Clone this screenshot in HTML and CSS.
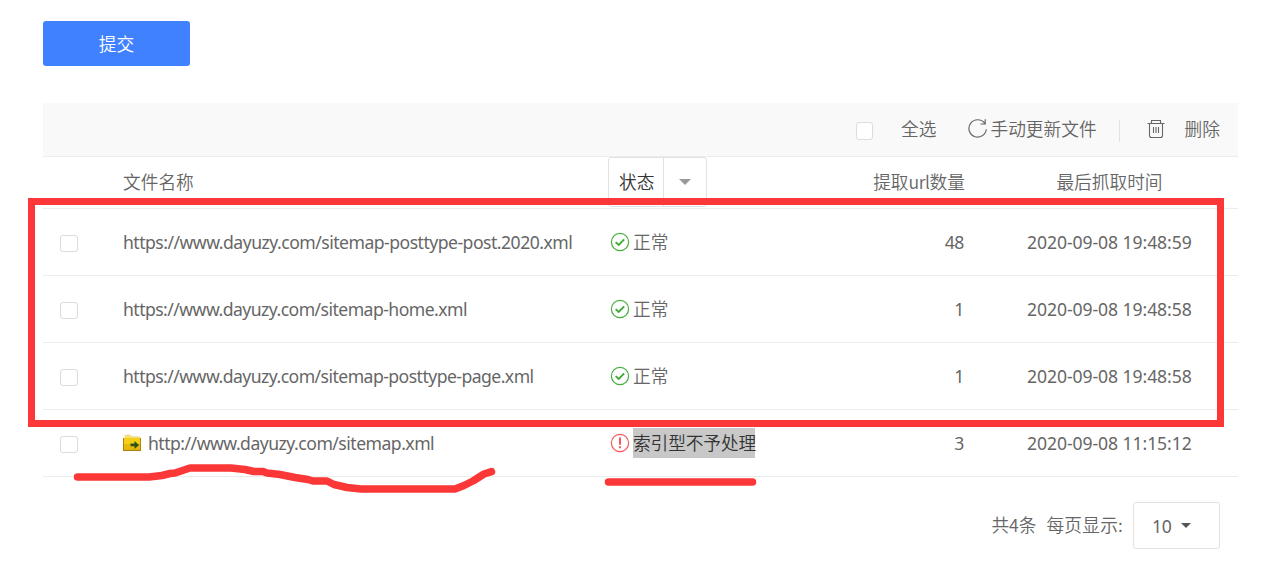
FILE: index.html
```html
<!DOCTYPE html>
<html lang="zh-CN">
<head>
<meta charset="utf-8">
<title>提交</title>
<link rel="stylesheet" href="styles.css">
</head>
<body>
<svg class="defs" width="0" height="0">
  <symbol id="ok" viewBox="0 0 20 20"><circle cx="10" cy="10" r="8.6" fill="none" stroke="#45ae3c" stroke-width="1.2"/><path d="M5.7 10.1 8.7 13l5.5-5.7" fill="none" stroke="#3fab35" stroke-width="1.9"/></symbol>
</svg>
<main class="page">
  <button class="submit">提交</button>
  <section class="panel">
    <div class="toolbar">
      <span class="box"></span>
      <span class="all">全选</span>
      <svg class="refresh" viewBox="0 0 20 20"><path d="M16.600 5.200A8.700 8.700 0 1 0 18.300 11.300M17.200 1.300v4.700h-4.700" fill="none" stroke="#666" stroke-width="1.200"/></svg>
      <span class="update">手动更新文件</span>
      <span class="divider"></span>
      <svg class="trash" viewBox="0 0 18 20"><path d="M.5 4.500h17M4.500 4V1.500h9V4M2.500 5v11.500q0 2 2 2h9q2 0 2-2V5M6.500 8v6M9 8v6M11.500 8v6" fill="none" stroke="#666" stroke-width="1.100"/></svg>
      <span class="delete">删除</span>
    </div>
    <div class="row head">
      <span></span>
      <span>文件名称</span>
      <div class="filter"><span class="filter-name">状态</span><span class="filter-arrow"><i class="caret"></i></span></div>
      <span class="count">提取<span class="word">url</span>数量</span>
      <span class="time">最后抓取时间</span>
    </div>
    <div class="row">
      <span class="box"></span>
      <span class="latin url">https://www.dayuzy.com/sitemap-posttype-post.2020.xml</span>
      <span class="status"><svg class="mark"><use href="#ok"/></svg><span>正常</span></span>
      <span class="latin count">48</span>
      <span class="latin time">2020-09-08 19:48:59</span>
    </div>
    <div class="row">
      <span class="box"></span>
      <span class="latin url short">https://www.dayuzy.com/sitemap-home.xml</span>
      <span class="status"><svg class="mark"><use href="#ok"/></svg><span>正常</span></span>
      <span class="latin count">1</span>
      <span class="latin time">2020-09-08 19:48:58</span>
    </div>
    <div class="row">
      <span class="box"></span>
      <span class="latin url short">https://www.dayuzy.com/sitemap-posttype-page.xml</span>
      <span class="status"><svg class="mark"><use href="#ok"/></svg><span>正常</span></span>
      <span class="latin count">1</span>
      <span class="latin time">2020-09-08 19:48:58</span>
    </div>
    <div class="row">
      <span class="box"></span>
      <span class="latin url file"><svg class="folder" viewBox="0 0 18 18"><path d="M2 3.500V2q0-1 1-1h4q1 0 1 1v.7h8q1 0 1 1V5H2z" fill="#f7df72" stroke="#e9d98c" stroke-width=".7"/><path d="M0 4h18v13H0z" fill="#ad8408"/><path d="M1 4h16v11.500H1z" fill="#f5cf18"/><path d="M1 10h16v5.500H1z" fill="#e8b90a"/><path d="M7.500 9.500h4V7l4.600 4-4.600 4v-2.700h-4z" fill="#2d5416"/></svg><span>http://www.dayuzy.com/sitemap.xml</span></span>
      <span class="status"><svg class="mark" viewBox="0 0 20 20"><circle cx="10" cy="10" r="8.6" fill="none" stroke="#fa5558" stroke-width="1.2"/><path d="M10 4.5v7.3M10 13.3v2" stroke="#fa5558" stroke-width="2"/></svg><span class="selected">索引型不予处理</span></span>
      <span class="latin count">3</span>
      <span class="latin time">2020-09-08 11:15:12</span>
    </div>
  </section>
  <footer class="pager">
    <span class="total">共4条</span>
    <span class="per">每页显示:</span>
    <div class="size"><span class="latin">10</span><i class="caret dark"></i></div>
  </footer>
</main>
<svg class="marks" width="1281" height="576" fill="none" stroke="#fc3737" stroke-linejoin="round" stroke-linecap="round">
  <path d="M31.5 201.5h1189v222h-1189z" stroke-width="7" stroke-linejoin="miter"/>
  <path d="M77.5 477H149L162 475.500 170 473.500 175 473 190 468H231L245 469.500 254 471.500 263 471.500 267 473 280 474.500 295 477.500 308 479.500 313 481H327L334 484.500 347 487.500 361 489H455L464 485.500 473 481 484 474 491.500 471.700" stroke-width="7.500"/>
  <path d="M608.500 482H752.500" stroke-width="7.500"/>
</svg>
</body>
</html>
```
FILE: styles.css
```css
* { box-sizing: border-box; }
body {
  margin: 0;
  background: #fff;
  color: #666;
  font: 350 17.7px/26px "Noto Sans CJK SC", sans-serif;
  white-space: nowrap;
}
.defs, .marks { position: absolute; top: 0; left: 0; pointer-events: none; }
.page { width: 1281px; height: 576px; padding: 21px 43px 0; overflow: hidden; }
.submit {
  display: block;
  width: 147px;
  height: 45px;
  padding: 0 0 2px;
  border: 0;
  border-radius: 3px;
  background: #4081ff;
  color: #fff;
  font: inherit;
}
.panel { margin-top: 37px; }
.toolbar {
  display: flex;
  align-items: center;
  justify-content: flex-end;
  height: 54px;
  padding-right: 18px;
  background: #f9f9f9;
  border-bottom: 1px solid #ececec;
}
.box {
  width: 18px;
  height: 17px;
  border: 1px solid #dcdcdc;
  border-radius: 3px;
  background: #fff;
}
.row > .box { margin-left: 17px; margin-top: 2px; }
.toolbar .box { width: 17px; height: 18px; margin-top: 2px; }
.all, .update, .delete { padding-bottom: 3px; }
.all { margin-left: 28px; }
.refresh { width: 20px; height: 20px; margin: -3px 0 0 32px; }
.update { margin-left: 2px; }
.divider { width: 1px; height: 22px; margin: 2px 27px 0 22px; background: #e2e2e2; }
.trash { width: 18px; height: 20px; margin-top: -2px; }
.delete { margin-left: 20px; }
.row {
  display: grid;
  grid-template-columns: 80px 488px 209px 145px 1fr;
  align-items: center;
  width: 1195px;
  height: 67px;
  border-bottom: 1px solid #ececec;
}
.head { height: 52px; }
.head > span { padding-bottom: 3px; }
.word { letter-spacing: -.4px; }
.filter {
  display: flex;
  align-self: start;
  width: 99px;
  height: 50px;
  margin-left: -3px;
  border: 1px solid #e2e2e2;
  border-radius: 3px;
  color: #333;
}
.filter-name { width: 55px; padding: 10px 0 0 10px; border-right: 1px solid #e2e2e2; }
.filter-arrow { display: flex; flex: 1; align-items: center; justify-content: center; padding-right: 1px; }
.caret { border: 6.5px solid transparent; border-top-color: #999; border-bottom: 0; }
.dark { border-width: 5px; border-top-color: #555; border-bottom: 0; }
.status { display: flex; align-items: center; }
.status > span { padding-bottom: 2px; }
.mark { width: 20px; height: 20px; margin: -1px 3px 0 -1px; }
.status > .selected { width: 122px; height: 30px; padding: 0; line-height: 29px; background: #c8c8c8; color: #333; letter-spacing: -.1px; }
.count { text-align: right; }
.time { justify-self: end; width: 165px; margin-right: 46px; }
.head .time { text-align: center; }
.latin { font-family: "Noto Sans", sans-serif; font-weight: 400; font-size: 17.6px; letter-spacing: -.08px; }
.url { letter-spacing: -.51px; }
.short { letter-spacing: -.54px; }
.count.latin { letter-spacing: -.4px; padding-right: 1px; }
.file { display: flex; align-items: center; }
.folder { width: 18px; height: 18px; margin-right: 7px; }
.pager { display: flex; align-items: center; justify-content: flex-end; margin-top: 25px; padding-right: 18px; }
.total, .per { padding-bottom: 3px; }
.per { margin: 0 10px 0 9px; letter-spacing: .2px; }
.total { margin-right: 1px; }
.size {
  display: flex;
  align-items: center;
  gap: 10px;
  width: 87px;
  height: 47px;
  padding-left: 18px;
  border: 1px solid #e2e2e2;
  border-radius: 3px;
}
.size .latin { letter-spacing: -.4px; }
```
